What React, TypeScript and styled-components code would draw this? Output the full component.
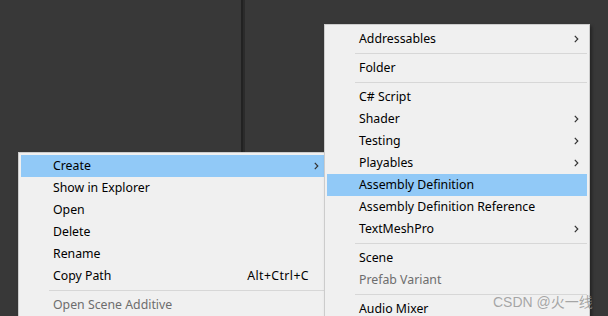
import React from "react";
import styled, { createGlobalStyle } from "styled-components";

const Global = createGlobalStyle`
  html, body { margin: 0; padding: 0; background: #383838; }
  body { font-family: "Noto Sans", "Liberation Sans", sans-serif; }
`;

const Screen = styled.div`
  position: relative;
  width: 608px;
  height: 316px;
  overflow: hidden;
  display: flex;
  background: #383838;
`;

const Panel = styled.div<{ $w?: number }>`
  flex: ${(p) => (p.$w ? `0 0 ${p.$w}px` : "1 1 auto")};
  background: #383838;
`;

const Divider = styled.div`
  flex: 0 0 4px;
  display: flex;
  &::before { content: ""; flex: 0 0 2px; background: #222222; }
  &::after { content: ""; flex: 0 0 2px; background: #2b2b2b; }
`;

const Menu = styled.div<{ $x: number; $y: number; $w: number; $pt: number }>`
  position: absolute;
  left: ${(p) => p.$x}px;
  top: ${(p) => p.$y}px;
  width: ${(p) => p.$w}px;
  box-sizing: border-box;
  background: #f0f0f0;
  border: 1px solid #cccccc;
  padding: ${(p) => p.$pt}px 2px 2px 2px;
  box-shadow: 2px 2px 3px rgba(0, 0, 0, 0.35);
  display: flex;
  flex-direction: column;
  font-family: "Noto Sans", "Liberation Sans", sans-serif;
  font-size: 12.3px;
`;

const Row = styled.div<{ $active?: boolean; $disabled?: boolean }>`
  height: 22px;
  line-height: 22px;
  display: flex;
  align-items: center;
  padding: 0 8px 0 32px;
  background: ${(p) => (p.$active ? "#91c9f7" : "transparent")};
  color: ${(p) => (p.$disabled ? "#6d6d6d" : "#000000")};
  white-space: nowrap;
`;

const Label = styled.span`
  flex: 1 1 auto;
`;

const Shortcut = styled.span`
  padding-right: 10px;
  letter-spacing: 0.4px;
`;

const Sep = styled.div`
  height: 7px;
  display: flex;
  align-items: center;
  padding-left: 28px;
  &::after { content: ""; flex: 1; height: 1px; background: #d7d7d7; }
`;

const Watermark = styled.div`
  position: absolute;
  left: 493px;
  top: 291px;
  font-family: "Liberation Sans", "Noto Sans CJK SC", sans-serif;
  font-size: 14px;
  color: rgba(140, 140, 140, 0.75);
  white-space: nowrap;
`;

const Arrow = () => (
  <svg width="5" height="8" viewBox="0 0 5 8">
    <path d="M0.8 0.8 L3.8 4 L0.8 7.2" fill="none" stroke="#333" strokeWidth="1.2" />
  </svg>
);

type Item = { label: string; sub?: boolean; active?: boolean; disabled?: boolean; shortcut?: string } | "sep";

const leftItems: Item[] = [
  { label: "Create", sub: true, active: true },
  { label: "Show in Explorer" },
  { label: "Open" },
  { label: "Delete" },
  { label: "Rename" },
  { label: "Copy Path", shortcut: "Alt+Ctrl+C" },
  "sep",
  { label: "Open Scene Additive", disabled: true },
];

const rightItems: Item[] = [
  { label: "Addressables", sub: true },
  "sep",
  { label: "Folder" },
  "sep",
  { label: "C# Script" },
  { label: "Shader", sub: true },
  { label: "Testing", sub: true },
  { label: "Playables", sub: true },
  { label: "Assembly Definition", active: true },
  { label: "Assembly Definition Reference" },
  { label: "TextMeshPro", sub: true },
  "sep",
  { label: "Scene" },
  { label: "Prefab Variant", disabled: true },
  "sep",
  { label: "Audio Mixer" },
];

const MenuItems = ({ items }: { items: Item[] }) => (
  <>
    {items.map((it, i) =>
      it === "sep" ? (
        <Sep key={i} />
      ) : (
        <Row key={i} $active={it.active} $disabled={it.disabled}>
          <Label>{it.label}</Label>
          {it.shortcut && <Shortcut>{it.shortcut}</Shortcut>}
          {it.sub && <Arrow />}
        </Row>
      )
    )}
  </>
);

export default function App() {
  return (
    <>
      <Global />
      <Screen>
        <Panel $w={241} />
        <Divider />
        <Panel />
        <Menu $x={18} $y={152} $w={312} $pt={2}>
          <MenuItems items={leftItems} />
        </Menu>
        <Menu $x={324} $y={24} $w={266} $pt={3}>
          <MenuItems items={rightItems} />
        </Menu>
        <Watermark>CSDN @火一线</Watermark>
      </Screen>
    </>
  );
}
